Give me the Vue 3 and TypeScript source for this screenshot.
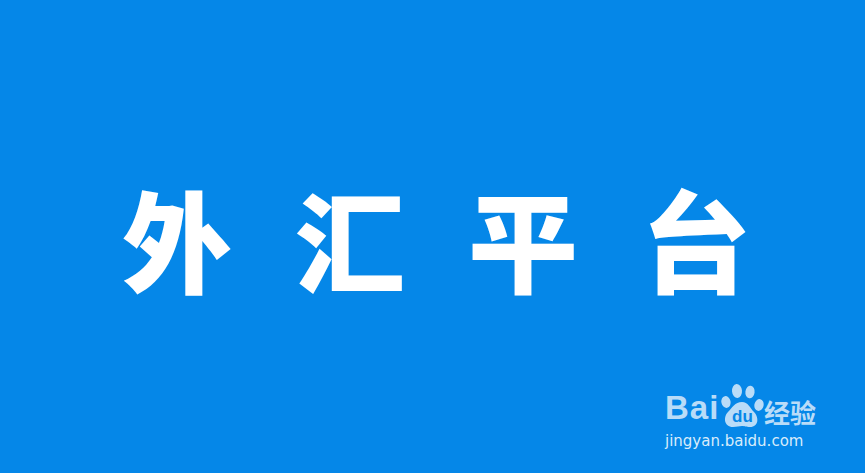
<script setup lang="ts">
const title: string[] = ['外', '汇', '平', '台']
</script>

<template>
  <main class="page">
    <h1 class="title">
      <span v-for="c in title" :key="c" class="ch">{{ c }}</span>
    </h1>
    <div class="mark">
      <div class="brand">
        <span class="bai">Bai</span>
        <svg class="paw" viewBox="0 0 44 48" width="44" height="48">
          <ellipse cx="6" cy="21" rx="4.6" ry="6" transform="rotate(-12 6 21)" fill="#b9dcf8"/>
          <ellipse cx="17" cy="10" rx="5" ry="7" transform="rotate(-5 17 10)" fill="#b9dcf8"/>
          <ellipse cx="30" cy="11" rx="4.6" ry="6.4" transform="rotate(8 30 11)" fill="#b9dcf8"/>
          <ellipse cx="39" cy="24" rx="4.6" ry="6" transform="rotate(12 39 24)" fill="#b9dcf8"/>
          <path d="M22 21c6 0 8 6 12 10 5 5 5 15-4 15-4 0-5-1-8-1s-5 1-9 1C4 46 3 36 8 31c4-4 7-10 14-10z" fill="#b9dcf8"/>
          <text x="22.5" y="41" text-anchor="middle" class="du">du</text>
        </svg>
        <span class="jy">经验</span>
      </div>
      <div class="url">jingyan.baidu.com</div>
    </div>
  </main>
</template>

<style>
html, body { margin: 0; padding: 0; }
</style>

<style scoped>
.page {
  width: 865px;
  height: 473px;
  background: #0587e8;
  position: relative;
  overflow: hidden;
  display: flex;
  align-items: center;
  justify-content: center;
  font-family: "Noto Sans CJK SC", sans-serif;
}
.title {
  margin: 0 0 0 8px;
  display: flex;
  gap: 63px;
  color: #fff;
  font-size: 110px;
  font-weight: 900;
  line-height: 1;
}
.mark {
  position: absolute;
  left: 665px;
  top: 381px;
}
.brand {
  display: flex;
  align-items: flex-end;
  gap: 1px;
  height: 48px;
  color: #b9dcf8;
  font-family: "Liberation Sans", sans-serif;
  font-weight: 700;
  font-size: 33px;
  line-height: 1;
}
.bai { width: 54px; letter-spacing: 1px; line-height: 42px; }
.paw { flex: none; }
.du {
  font-family: "Liberation Sans", sans-serif;
  font-size: 17px;
  font-weight: 700;
  fill: #0587e8;
}
.jy {
  font-family: "Noto Sans CJK SC", sans-serif;
  font-size: 26px;
  font-weight: 700;
  line-height: 34px;
  margin-left: -1px;
}
.url {
  color: #d8ecfb;
  font-family: "DejaVu Sans", sans-serif;
  font-size: 15px;
  line-height: 20px;
  margin-top: 2px;
  white-space: nowrap;
}
</style>
